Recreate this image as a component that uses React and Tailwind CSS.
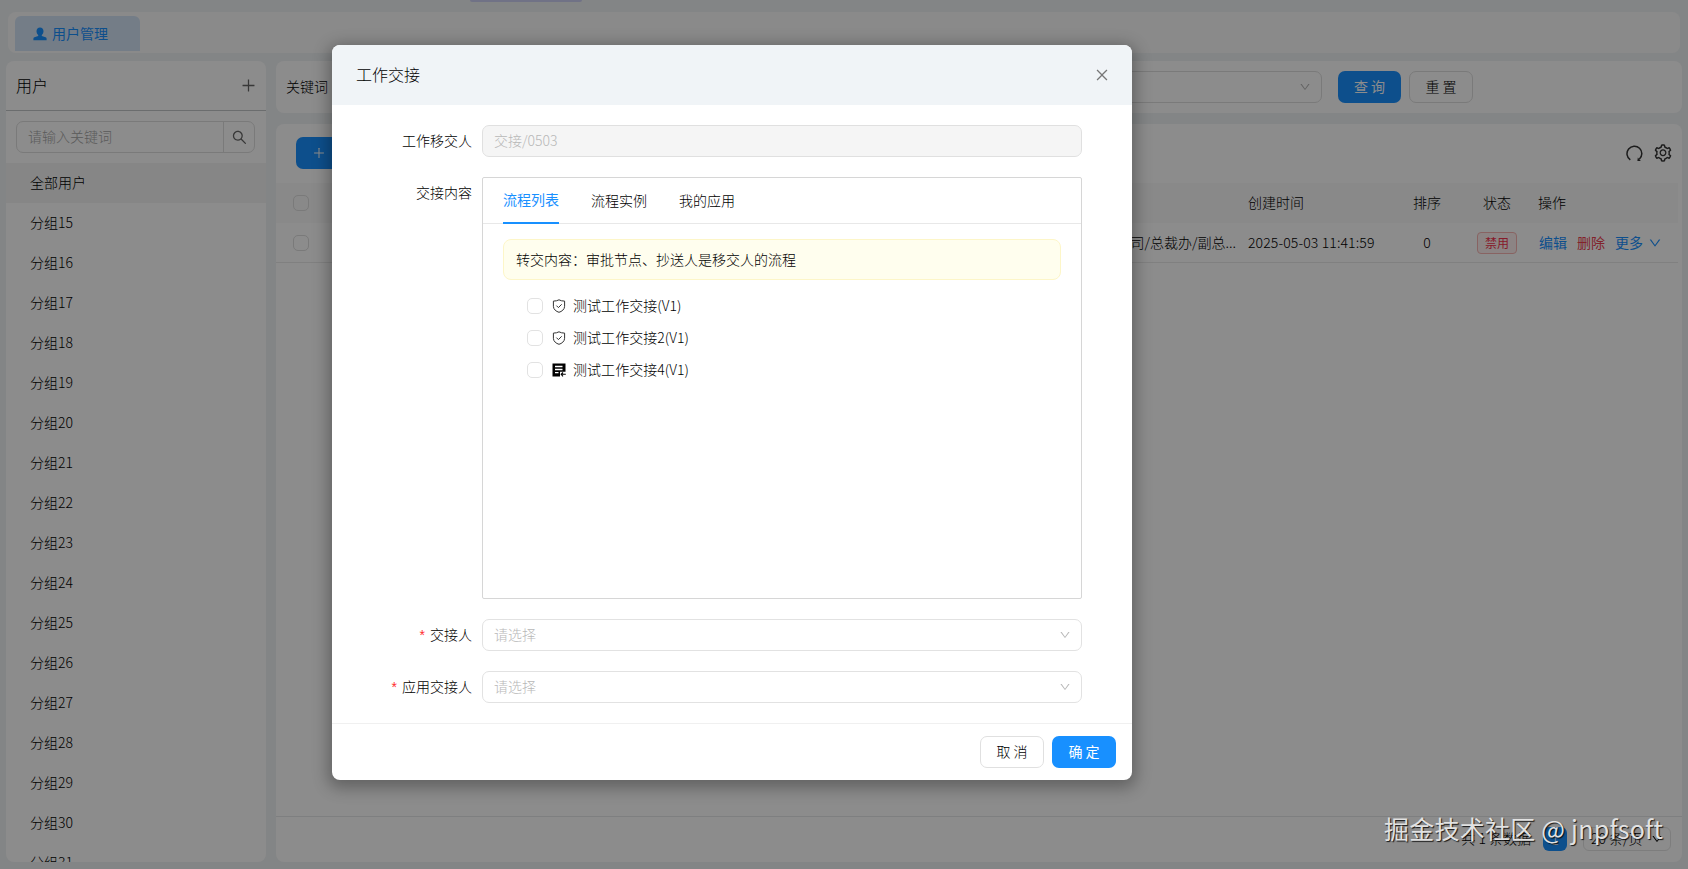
import React from "react";
import { AiOutlinePlus, AiOutlineSearch, AiOutlineClose, AiOutlineSetting, AiOutlineDown } from "react-icons/ai";

const groups = Array.from({ length: 17 }, (_, i) => "分组" + (15 + i));

function UserIcon() {
  return (
    <svg className="h-[14px] w-[14px]" viewBox="0 0 14 14" fill="currentColor">
      <path d="M7 0.400c2.100 0 3.500 1.700 3.500 3.900 0 1.500-.7 3-1.700 3.800v.8l3.800 1.300c.7.300 1 .8 1 1.500v1.500H.4v-1.500c0-.7.3-1.200 1-1.500L5.200 8.900v-.8C4.200 7.300 3.500 5.800 3.500 4.300 3.500 2.100 4.900.4 7 .4z" />
    </svg>
  );
}

function ReloadIcon() {
  return (
    <svg className="h-[18px] w-[18px]" viewBox="0 0 18 18" fill="none" stroke="currentColor" strokeWidth="1.500">
      <path d="M4.300 15.800A7.400 7.400 0 1 1 13.300 15.200" />
      <path d="M11.400 16.900l.4-3.400 3 3.400z" fill="currentColor" stroke="none" />
    </svg>
  );
}

function ShieldIcon() {
  return (
    <svg className="h-[14px] w-[14px] text-[#333]" viewBox="0 0 14 14" fill="none" stroke="currentColor" strokeWidth="1">
      <path d="M7 .8C8.500 1.700 10.500 2.100 12.600 2.100V7.300C12.600 10.400 9.800 12.500 7 13.300 4.200 12.500 1.400 10.400 1.400 7.300V2.100C3.500 2.100 5.500 1.700 7 .8z" strokeLinejoin="round" />
      <path d="M4.400 6.600 6.400 8.600 9.700 5.300" />
    </svg>
  );
}

function FormIcon() {
  return (
    <svg className="h-[14px] w-[14px]" viewBox="0 0 14 14">
      <path d="M.5.5H13.500V8.800H8V13.500H.5z" fill="currentColor" />
      <path d="M3 3.500H10.500M3 6.500H10.500M3 9.700H6.500" stroke="white" strokeWidth="1.300" />
      <path d="M8.800 11.300H13.800M11 9.500 9.200 11.300 11 13.300" stroke="currentColor" strokeWidth="1.100" fill="none" />
    </svg>
  );
}

function Label({ children }) {
  return <span className="block pb-[2px] whitespace-nowrap">{children}</span>;
}

function Field({ label, required, children }) {
  return (
    <div className="flex">
      <div className="flex h-8 w-[150px] shrink-0 items-center justify-end pr-[10px]">
        {required && <span className="mr-[5px] font-['Liberation_Sans'] text-[#ff2d2f]">*</span>}
        <Label>{label}</Label>
      </div>
      <div className="w-[600px]">{children}</div>
    </div>
  );
}

function SelectBox() {
  return (
    <div className="flex h-8 items-center justify-between rounded-[7px] border border-[#e2e2e2] pr-[10px] pl-[11px] text-[#b8b8b8]">
      <Label>请选择</Label>
      <AiOutlineDown size={12} />
    </div>
  );
}

function Sidebar() {
  return (
    <aside className="flex w-[260px] shrink-0 flex-col overflow-hidden rounded-lg bg-white">
      <div className="flex h-[50px] shrink-0 items-center justify-between border-b border-[#c4c6c8] pr-[9px] pl-[10px] text-base">
        <Label>用户</Label>
        <AiOutlinePlus size={17} className="text-[#666]" />
      </div>
      <div className="flex h-[52px] shrink-0 pt-[10px] pr-[11px] pl-[10px]">
        <div className="flex h-8 w-full items-center rounded-[7px] border border-[#dedede]">
          <span className="flex-1 pb-[2px] pl-[11px] text-[#a6a6a6]">请输入关键词</span>
          <span className="flex h-full w-[31px] items-center justify-center border-l border-[#dedede] text-[#666]">
            <AiOutlineSearch size={17} />
          </span>
        </div>
      </div>
      <div className="flex h-10 shrink-0 items-center bg-[#f4f4f4] pl-6"><Label>全部用户</Label></div>
      {groups.map((g) => (
        <div key={g} className="flex h-10 shrink-0 items-center pl-6"><Label>{g}</Label></div>
      ))}
    </aside>
  );
}

function Filters() {
  return (
    <section className="flex h-[52px] shrink-0 items-center rounded-lg bg-white pl-[10px]">
      <span className="w-[60px]"><Label>关键词</Label></span>
      <div className="flex h-8 w-[976px] items-center justify-end rounded-[7px] border border-[#dedede] pr-[10px]">
        <AiOutlineDown size={12} className="text-[#b4b4b4]" />
      </div>
      <div className="ml-4 flex h-8 w-[63px] items-center justify-center rounded-[7px] bg-[#1890ff] font-normal text-white"><Label>查 询</Label></div>
      <div className="ml-2 flex h-8 w-16 items-center justify-center rounded-[7px] border border-[#dedede]"><Label>重 置</Label></div>
    </section>
  );
}

function UserTable() {
  return (
    <section className="mt-[11px] flex min-h-0 flex-1 flex-col rounded-lg bg-white">
      <div className="flex h-[59px] shrink-0 items-center justify-between pr-[9px] pb-[2px] pl-5">
        <div className="flex h-8 w-20 items-center gap-2 rounded-[7px] bg-[#1890ff] pl-4 text-white">
          <AiOutlinePlus size={14} />
          <span>新建</span>
        </div>
        <div className="flex items-center gap-[9px] text-[#333]">
          <ReloadIcon />
          <AiOutlineSetting size={20} />
        </div>
      </div>
      <div className="mr-1 flex h-10 shrink-0 items-center bg-[#f9f9f9] pl-[17px]">
        <span className="h-4 w-4 rounded-[5px] border border-[#dedede]" />
        <span className="ml-[939px] w-[151px]"><Label>创建时间</Label></span>
        <span className="w-[56px] text-center"><Label>排序</Label></span>
        <span className="ml-[13px] w-[58px] text-center"><Label>状态</Label></span>
        <span className="ml-[12px]"><Label>操作</Label></span>
      </div>
      <div className="mr-1 flex h-10 shrink-0 items-center border-b border-[#eaeaea] pl-[17px]">
        <span className="h-4 w-4 rounded-[5px] border border-[#dedede]" />
        <span className="ml-[806px] flex w-[121px] justify-end"><Label>公司/总裁办/副总...</Label></span>
        <span className="ml-[12px] w-[151px] tracking-[0.12px]"><Label>2025-05-03 11:41:59</Label></span>
        <span className="w-[56px] text-center"><Label>0</Label></span>
        <span className="ml-[13px] flex w-[58px] justify-center">
          <span className="flex h-[22px] w-10 items-center justify-center rounded border border-[#f7b5b2] bg-[#fff1f0] text-xs font-normal text-[#f5324d]">禁用</span>
        </span>
        <span className="ml-[13px] flex items-center gap-[10px] font-normal text-[#1890ff]">
          <Label>编辑</Label>
          <span className="text-[#ed4050]"><Label>删除</Label></span>
          <span className="flex items-center gap-[5px]"><Label>更多</Label><AiOutlineDown size={14} /></span>
        </span>
      </div>
      <div className="flex-1" />
      <div className="flex h-[46px] shrink-0 items-center justify-end border-t border-[#e6e8ea] pr-[11px] pb-[2px]">
        <Label>共 1 条数据</Label>
        <span className="ml-3 flex h-6 w-6 items-center justify-center rounded-md bg-[#1890ff] text-white">1</span>
        <span className="ml-4 flex h-6 w-[88px] items-center justify-between rounded-md border border-[#e4e4e4] px-[7px]">
          <Label>20 条/页</Label> <AiOutlineDown size={12} />
        </span>
      </div>
    </section>
  );
}

function TransferModal() {
  const items = [
    ["测试工作交接(V1)", ShieldIcon],
    ["测试工作交接2(V1)", ShieldIcon],
    ["测试工作交接4(V1)", FormIcon],
  ];
  return (
    <div className="flex h-[735px] w-[800px] flex-col overflow-hidden rounded-lg bg-white shadow-[0_4px_16px_4px_rgba(0,0,0,0.3)]">
      <div className="flex h-[60px] shrink-0 items-center justify-between bg-[#f0f4f7] pr-[22px] pl-6 text-base">
        <Label>工作交接</Label>
        <AiOutlineClose size={16} className="text-[#777]" />
      </div>
      <div className="flex flex-1 flex-col gap-5 pt-5">
        <Field label="工作移交人">
          <div className="flex h-8 items-center rounded-[7px] border border-[#e0e0e0] bg-[#f5f5f5] px-[11px] text-[#b8b8b8]"><Label>交接/0503</Label></div>
        </Field>
        <Field label="交接内容">
          <div className="h-[422px] rounded-[2px] border border-[#d6d6d6]">
            <div className="flex h-[46px] gap-8 border-b border-[#e8e8e8] px-5">
              <span className="-mb-px flex items-center border-b-2 border-[#1890ff] font-normal text-[#1890ff]"><Label>流程列表</Label></span>
              <span className="flex items-center"><Label>流程实例</Label></span>
              <span className="flex items-center"><Label>我的应用</Label></span>
            </div>
            <div className="mx-5 mt-[15px] flex h-[41px] items-center rounded-lg border border-[#fdf6c8] bg-[#fffeee] px-3"><Label>转交内容：审批节点、抄送人是移交人的流程</Label></div>
            <div className="flex flex-col pt-[10px] pl-[44px]">
              {items.map(([t, Icon]) => (
                <div key={t} className="flex h-8 items-center">
                  <span className="mr-[9px] h-4 w-4 rounded-[5px] border border-[#e2e2e2]" />
                  <Icon />
                  <span className="ml-[7px] flex tracking-[0.05px]"><Label>{t}</Label></span>
                </div>
              ))}
            </div>
          </div>
        </Field>
        <Field label="交接人" required><SelectBox /></Field>
        <Field label="应用交接人" required><SelectBox /></Field>
      </div>
      <div className="flex h-[57px] shrink-0 items-center justify-end gap-2 border-t border-[#f0f0f0] pr-4">
        <div className="flex h-8 w-16 items-center justify-center rounded-[7px] border border-[#e0e0e0]"><Label>取 消</Label></div>
        <div className="flex h-8 w-16 items-center justify-center rounded-[7px] bg-[#1890ff] font-normal text-white"><Label>确 定</Label></div>
      </div>
    </div>
  );
}

export default function App() {
  return (
    <div className="relative h-[869px] w-[1688px] overflow-hidden bg-[#eff2f4] font-['Noto_Sans_CJK_SC',sans-serif] text-sm font-light text-black">
      <div className="flex h-full flex-col">
        <div className="flex h-3 shrink-0 pl-[470px]">
          <div className="h-[2px] w-[112px] rounded-b bg-[#cdd0f5]" />
        </div>
        <div className="mx-2 flex h-[41px] shrink-0 items-end rounded-lg bg-[#fcfcfc] pb-[2px] pl-[7px]">
          <div className="flex h-[35px] w-[125px] items-center gap-[5px] rounded-t-md bg-[#d3e4f6] pl-[18px] font-normal text-[#1890ff]">
            <UserIcon />
            <Label>用户管理</Label>
          </div>
        </div>
        <div className="flex min-h-0 flex-1 gap-[10px] pt-[8px] pr-[6px] pb-[7px] pl-[6px]">
          <Sidebar />
          <div className="flex min-w-0 flex-1 flex-col">
            <Filters />
            <UserTable />
          </div>
        </div>
      </div>
      <div className="absolute inset-0 flex items-start bg-black/45 pt-[45px] pl-[332px]">
        <TransferModal />
      </div>
      <div className="absolute top-[810px] left-[1384px] text-[25px] leading-9 font-normal tracking-[0.25px] whitespace-nowrap text-[#e2e2e2] [text-shadow:1px_1px_1px_rgba(0,0,0,0.85)]">
        掘金技术社区 @ jnpfsoft
      </div>
    </div>
  );
}
